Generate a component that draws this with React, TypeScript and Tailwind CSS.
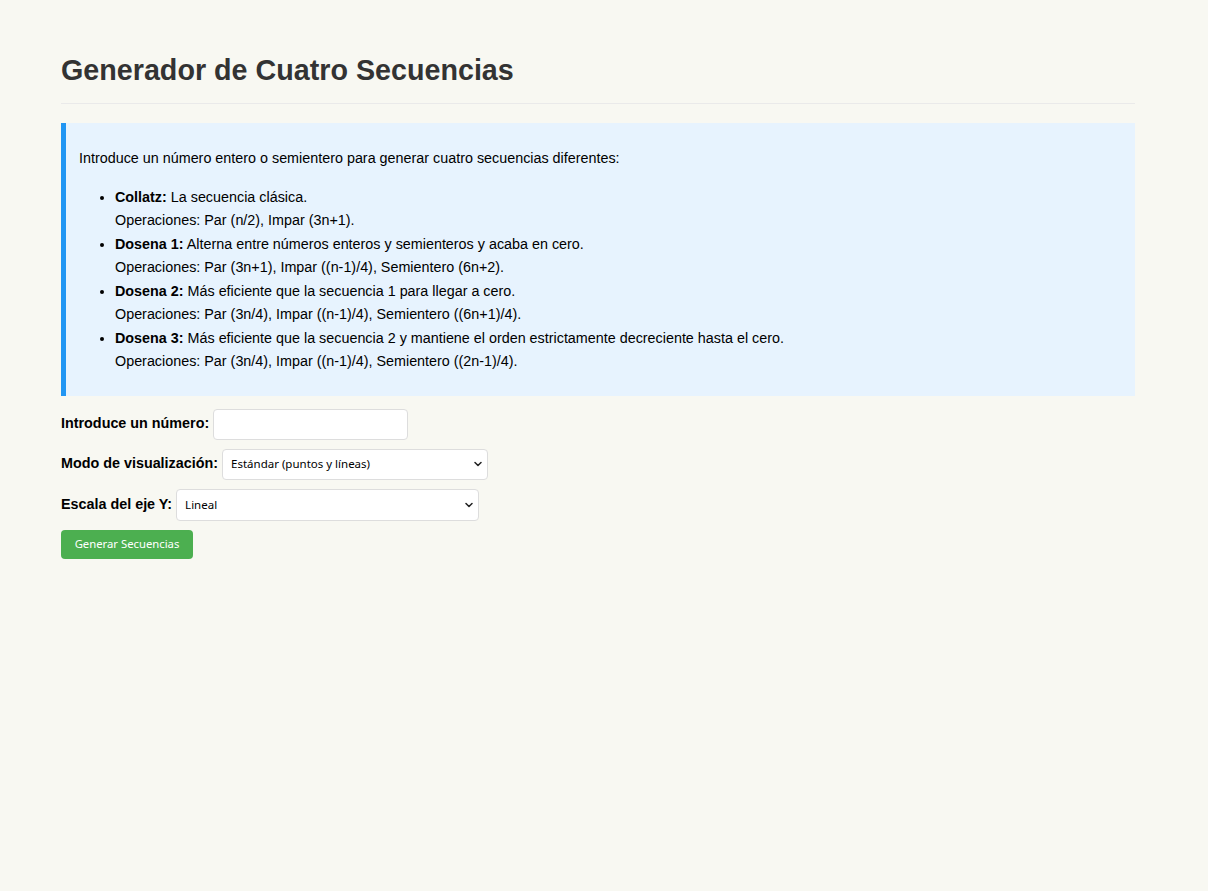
import React, { useState } from 'react';

const Chevron: React.FC = () => (
  <svg
    className="pointer-events-none absolute right-[6px] top-1/2 -translate-y-1/2"
    width="8"
    height="6"
    viewBox="0 0 8 6"
    fill="none"
  >
    <path d="M1 1.5L4 4.5L7 1.5" stroke="#222" strokeWidth="1.5" strokeLinecap="round" strokeLinejoin="round" />
  </svg>
);

const App: React.FC = () => {
  const [value, setValue] = useState('');

  return (
    <div className="min-h-[891px] bg-[#f8f8f2] font-['Liberation_Sans',Arial,sans-serif] text-black">
      <div className="ml-[61px] w-[1074px] pt-[47px]">
        <h1 className="text-[28.7px] leading-[47px] font-bold text-[#333] pb-[9px] border-b border-[#eaeaea]">
          Generador de Cuatro Secuencias
        </h1>

        <div className="mt-[19px] border-l-[5px] border-[#2196F3] bg-[#e7f3fe] pl-[13px] pr-[14px] pt-[24px] pb-[22px] text-[14.35px] leading-[23.5px]">
          <p>Introduce un número entero o semientero para generar cuatro secuencias diferentes:</p>
          <ul className="mt-[15px] pl-[36px] list-disc">
            <li>
              <strong>Collatz:</strong> La secuencia clásica.
              <br />
              Operaciones: Par (n/2), Impar (3n+1).
            </li>
            <li>
              <strong>Dosena 1:</strong> Alterna entre números enteros y semienteros y acaba en cero.
              <br />
              Operaciones: Par (3n+1), Impar ((n-1)/4), Semientero (6n+2).
            </li>
            <li>
              <strong>Dosena 2:</strong> Más eficiente que la secuencia 1 para llegar a cero.
              <br />
              Operaciones: Par (3n/4), Impar ((n-1)/4), Semientero ((6n+1)/4).
            </li>
            <li>
              <strong>Dosena 3:</strong> Más eficiente que la secuencia 2 y mantiene el orden estrictamente decreciente hasta el cero.
              <br />
              Operaciones: Par (3n/4), Impar ((n-1)/4), Semientero ((2n-1)/4).
            </li>
          </ul>
        </div>

        <div className="mt-[13px] text-[14.35px]">
          <div className="flex items-center gap-[4px] h-[31px] mb-[9px]">
            <label className="font-bold">Introduce un número:</label>
            <input
              type="text"
              value={value}
              onChange={(e) => setValue(e.target.value)}
              className="w-[195px] h-[31px] bg-white border border-[#ddd] rounded-[4px] px-[7px] focus:outline-none"
            />
          </div>
          <div className="flex items-center gap-[4px] h-[31px] mb-[9px]">
            <label className="font-bold">Modo de visualización:</label>
            <div className="relative">
              <select className="appearance-none w-[266px] h-[31px] bg-white border border-[#ddd] rounded-[4px] pl-[8px] text-[11.5px] font-['Noto_Sans',sans-serif] focus:outline-none">
                <option>Estándar (puntos y líneas)</option>
                <option>Solo puntos</option>
                <option>Solo líneas</option>
              </select>
              <Chevron />
            </div>
          </div>
          <div className="flex items-center gap-[4px] h-[32px] mb-[9px]">
            <label className="font-bold">Escala del eje Y:</label>
            <div className="relative">
              <select className="appearance-none w-[303px] h-[32px] bg-white border border-[#ddd] rounded-[4px] pl-[8px] text-[11.5px] font-['Noto_Sans',sans-serif] focus:outline-none">
                <option>Lineal</option>
                <option>Logarítmica</option>
              </select>
              <Chevron />
            </div>
          </div>
          <button className="w-[132px] h-[29px] bg-[#4CAF50] text-white rounded-[4px] text-[11.3px] font-['Noto_Sans',sans-serif]">
            Generar Secuencias
          </button>
        </div>
      </div>
    </div>
  );
};

export default App;
